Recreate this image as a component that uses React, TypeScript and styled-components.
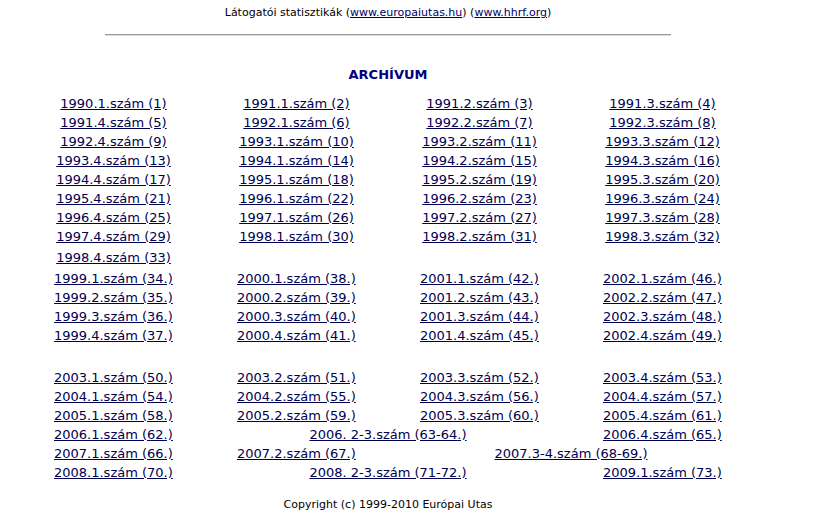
import React from 'react';
import styled, { createGlobalStyle } from 'styled-components';

const GlobalStyle = createGlobalStyle`
    body {
        margin: 0;
        background: #FFF;
        font-family: "DejaVu Sans", Verdana, sans-serif;
        color: #000;
    }
`;

type Cell = { text: string; span?: number; center?: boolean };

// 1990.1 then 1991.1 ... 1998.3
const early: string[] = ['1990.1.szám (1)'];
for (let j = 0; j < 31; j++) {
    early.push(`${1991 + Math.floor(j / 4)}.${(j % 4) + 1}.szám (${j + 2})`);
}

const nineties: Cell[] = [1, 2, 3, 4].flatMap((q) =>
    [1999, 2000, 2001, 2002].map((y, c) => ({ text: `${y}.${q}.szám (${34 + c * 4 + q - 1}.)` }))
);

const late: Cell[] = [
    { text: '2003.1.szám (50.)' }, { text: '2003.2.szám (51.)' }, { text: '2003.3.szám (52.)' }, { text: '2003.4.szám (53.)' },
    { text: '2004.1.szám (54.)' }, { text: '2004.2.szám (55.)' }, { text: '2004.3.szám (56.)' }, { text: '2004.4.szám (57.)' },
    { text: '2005.1.szám (58.)' }, { text: '2005.2.szám (59.)' }, { text: '2005.3.szám (60.)' }, { text: '2005.4.szám (61.)' },
    { text: '2006.1.szám (62.)' }, { text: '2006. 2-3.szám (63-64.)', span: 2, center: true }, { text: '2006.4.szám (65.)' },
    { text: '2007.1.szám (66.)' }, { text: '2007.2.szám (67.)' }, { text: '2007.3-4.szám (68-69.)', span: 2, center: true },
    { text: '2008.1.szám (70.)' }, { text: '2008. 2-3.szám (71-72.)', span: 2, center: true }, { text: '2009.1.szám (73.)' },
];

export default function App(): JSX.Element {
    return (
        <Page>
            <GlobalStyle />
            <StatLine>
                Látogatói statisztikák (<SmallLink href="#">www.europaiutas.hu</SmallLink>) (<SmallLink href="#">www.hhrf.org</SmallLink>)
            </StatLine>
            <Rule />
            <Title>ARCHÍVUM</Title>
            <Grid $gap={11}>
                {early.map((t) => (
                    <Item key={t} $center><Issue href="#">{t}</Issue></Item>
                ))}
            </Grid>
            <Grid $gap={2}>
                <Item $center><Issue href="#">1998.4.szám (33)</Issue></Item>
            </Grid>
            <Grid $gap={2}>
                {nineties.map((c) => (
                    <Item key={c.text}><Issue href="#">{c.text}</Issue></Item>
                ))}
            </Grid>
            <Grid $gap={23}>
                {late.map((c) => (
                    <Item key={c.text} $span={c.span} $center={c.center}>
                        <Issue href="#">{c.text}</Issue>
                    </Item>
                ))}
            </Grid>
            <Copyright>Copyright (c) 1999-2010 Európai Utas</Copyright>
        </Page>
    );
}

const Page = styled.div`
    width: 776px;
    display: flex;
    flex-direction: column;
    align-items: center;
`;

const StatLine = styled.p`
    margin: 6px 0 0;
    font-size: 11px;
    line-height: 14px;
`;

const SmallLink = styled.a`
    color: #000066;
    text-decoration: underline;
`;

const Rule = styled.hr`
    width: 566px;
    margin: 14px 0 0;
    border: 0;
    border-top: 1px solid #999;
    border-bottom: 1px solid #ddd;
    height: 0;
`;

const Title = styled.h2`
    margin: 31px 0 0;
    font-size: 13px;
    line-height: 16px;
    font-weight: bold;
    color: #000080;
`;

const Grid = styled.div<{ $gap?: number }>`
    width: 732px;
    margin-top: ${(p) => p.$gap ?? 0}px;
    display: grid;
    grid-template-columns: repeat(4, 183px);
    grid-auto-rows: 19px;
`;

const Item = styled.div<{ $span?: number; $center?: boolean }>`
    grid-column: span ${(p) => p.$span ?? 1};
    display: flex;
    align-items: center;
    justify-content: ${(p) => (p.$center ? 'center' : 'flex-start')};
    padding-left: ${(p) => (p.$center ? 0 : 32)}px;
    white-space: nowrap;
`;

const Issue = styled.a`
    font-size: 13px;
    color: #000050;
    text-decoration: underline;
`;

const Copyright = styled.p`
    margin: 16px 0 0;
    font-size: 11px;
    line-height: 14px;
`;
